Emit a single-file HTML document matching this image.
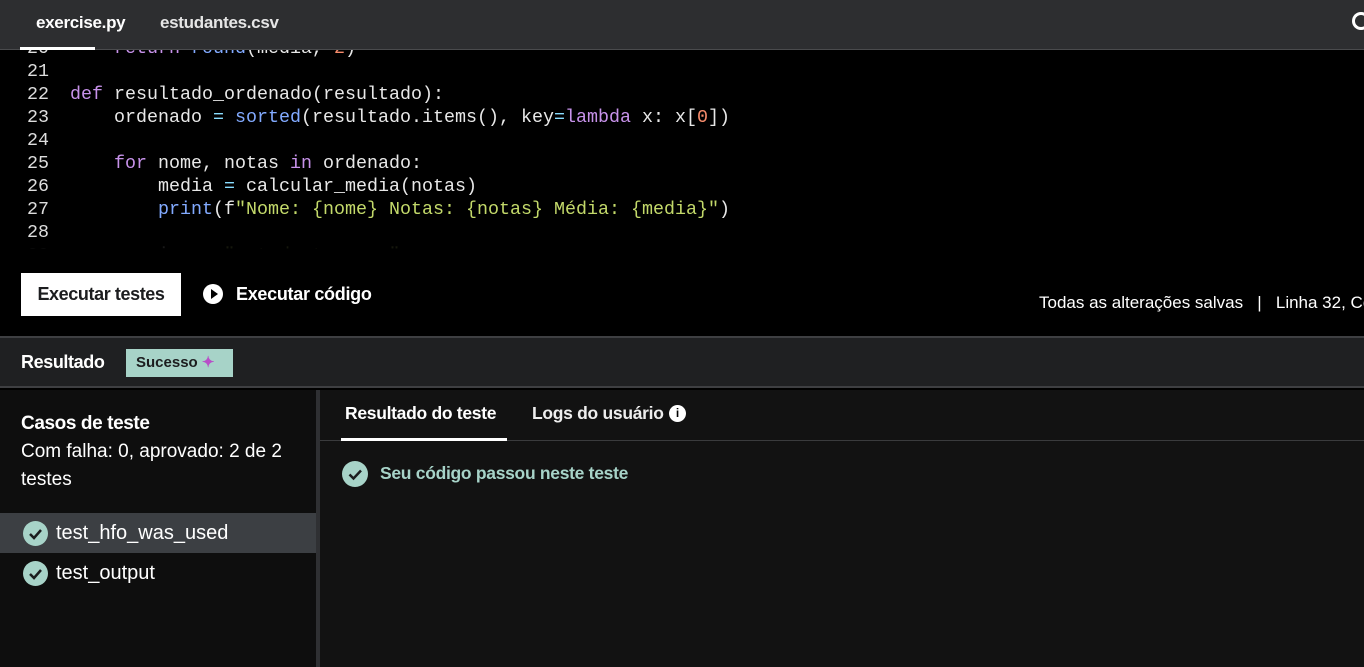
<!DOCTYPE html>
<html><head><meta charset="utf-8"><style>
*{margin:0;padding:0;box-sizing:border-box}
body{width:1364px;height:667px;overflow:hidden;background:#000;font-family:"Liberation Sans",sans-serif;color:#fff;position:relative}
.abs{position:absolute;white-space:nowrap}
.top{left:0;top:0;width:1364px;height:50px;background:#2d2e30;border-bottom:1px solid #4a4b4d}
.tab{top:13px;font-size:17px;font-weight:bold;letter-spacing:-0.3px}
.code{left:0;top:37px;width:1364px;height:213px;overflow:hidden;font-family:"Liberation Mono",monospace;font-size:18.33px;line-height:23px;color:#e8e8e8}
.ln{position:absolute;left:0;width:49px;text-align:right;color:#ddd}
.cl{position:absolute;left:70px;white-space:pre}
.k{color:#c792ea}.b{color:#82aaff}.o{color:#89ddff}.n{color:#f78c6c}.s{color:#c3d96a}
.fade{left:0;top:238px;width:1364px;height:14px;background:linear-gradient(rgba(0,0,0,0.3),#000 80%)}
</style></head><body>
<div class="abs code">
<div class="ln" style="top:0">20</div><div class="cl" style="top:0">    <span class="k">return</span> <span class="b">round</span>(media, <span class="n">2</span>)</div>
<div class="ln" style="top:23px">21</div>
<div class="ln" style="top:46px">22</div><div class="cl" style="top:46px"><span class="k">def</span> resultado_ordenado(resultado):</div>
<div class="ln" style="top:69px">23</div><div class="cl" style="top:69px">    ordenado <span class="o">=</span> <span class="b">sorted</span>(resultado.items(), key<span class="o">=</span><span class="k">lambda</span> x: x[<span class="n">0</span>])</div>
<div class="ln" style="top:92px">24</div>
<div class="ln" style="top:115px">25</div><div class="cl" style="top:115px">    <span class="k">for</span> nome, notas <span class="k">in</span> ordenado:</div>
<div class="ln" style="top:138px">26</div><div class="cl" style="top:138px">        media <span class="o">=</span> calcular_media(notas)</div>
<div class="ln" style="top:161px">27</div><div class="cl" style="top:161px">        <span class="b">print</span>(f<span class="s">"Nome: {nome} Notas: {notas} Média: {media}"</span>)</div>
<div class="ln" style="top:184px">28</div>
<div class="ln" style="top:207px">29</div><div class="cl" style="top:207px">    arquivo <span class="o">=</span> <span class="s">"estudantes.csv"</span></div>
</div>
<div class="abs top"></div>
<div class="abs tab" style="left:36px">exercise.py</div>
<div class="abs tab" style="left:160px;color:#e6e6e6">estudantes.csv</div>
<div class="abs" style="left:1352px;top:12px;width:18px;height:18px;border:3px solid #fff;border-radius:50%;border-right-color:transparent"></div>
<div class="abs" style="left:20px;top:47px;width:75px;height:3px;background:#fff"></div>
<div class="abs fade"></div>
<div class="abs" style="left:0;top:250px;width:1364px;height:86px;background:#000"></div>
<div class="abs" style="left:21px;top:273px;width:160px;height:43px;background:#fff;color:#1c1d1f;font-weight:bold;font-size:18px;line-height:43px;text-align:center;letter-spacing:-0.4px">Executar testes</div>
<div class="abs" style="left:203px;top:284px;width:20px;height:20px;border-radius:50%;background:#fff"></div>
<div class="abs" style="left:211px;top:289px;width:0;height:0;border-left:7px solid #000;border-top:5px solid transparent;border-bottom:5px solid transparent"></div>
<div class="abs" style="left:236px;top:284px;font-weight:bold;font-size:18px;letter-spacing:-0.3px">Executar código</div>
<div class="abs" style="left:1039px;top:293px;font-size:17px">Todas as alterações salvas &nbsp;&nbsp;|&nbsp;&nbsp; Linha 32, Coluna 1</div>
<div class="abs" style="left:0;top:336px;width:1364px;height:52px;background:#1f2022;border-top:2px solid #3e3f42;border-bottom:2px solid #3e3f42"></div>
<div class="abs" style="left:21px;top:352px;font-weight:bold;font-size:18px;letter-spacing:-0.4px">Resultado</div>
<div class="abs" style="left:126px;top:349px;width:107px;height:28px;background:#a7d3c8;color:#1c1d1f;font-weight:bold;font-size:15px;line-height:28px;padding-left:10px">Sucesso <span style="color:#b84fc8">✦</span></div>
<div class="abs" style="left:0;top:390px;width:316px;height:277px;background:#0e0e0e"></div>
<div class="abs" style="left:316px;top:390px;width:4px;height:277px;background:#2f3033"></div>
<div class="abs" style="left:320px;top:390px;width:1044px;height:277px;background:#121212"></div>
<div class="abs" style="left:21px;top:413px;font-weight:bold;font-size:19px;letter-spacing:-0.4px">Casos de teste</div>
<div class="abs" style="left:21px;top:438px;font-size:19px;line-height:28px;width:285px;white-space:normal">Com falha: 0, aprovado: 2 de 2 testes</div>
<div class="abs" style="left:0;top:513px;width:316px;height:40px;background:#3c3f43"></div>
<svg class="abs" style="left:23px;top:521px" width="25" height="25"><circle cx="12.5" cy="12.5" r="12.5" fill="#a7d3c8"/><path d="M7 13l4 4 7-8" stroke="#1c1d1f" stroke-width="2.5" fill="none"/></svg>
<div class="abs" style="left:56px;top:522px;font-size:20px">test_hfo_was_used</div>
<svg class="abs" style="left:23px;top:561px" width="25" height="25"><circle cx="12.5" cy="12.5" r="12.5" fill="#a7d3c8"/><path d="M7 13l4 4 7-8" stroke="#1c1d1f" stroke-width="2.5" fill="none"/></svg>
<div class="abs" style="left:56px;top:562px;font-size:20px">test_output</div>
<div class="abs" style="left:320px;top:440px;width:1044px;height:1px;background:#3a3b3d"></div>
<div class="abs" style="left:345px;top:403px;font-weight:bold;font-size:17.5px;letter-spacing:-0.3px">Resultado do teste</div>
<div class="abs" style="left:341px;top:438px;width:166px;height:3px;background:#fff"></div>
<div class="abs" style="left:532px;top:403px;font-weight:bold;font-size:17.5px;letter-spacing:-0.3px;color:#eee">Logs do usuário</div>
<div class="abs" style="left:669px;top:405px;width:17px;height:17px;border-radius:50%;background:#fff;color:#000;font-size:12px;font-weight:bold;text-align:center;line-height:17px">i</div>
<svg class="abs" style="left:342px;top:461px" width="26" height="26"><circle cx="13" cy="13" r="13" fill="#a7d3c8"/><path d="M7.5 13.5l4 4 7.5-8" stroke="#1c1d1f" stroke-width="2.5" fill="none"/></svg>
<div class="abs" style="left:380px;top:463px;font-weight:bold;font-size:17.5px;color:#a7d3c8;letter-spacing:-0.3px">Seu código passou neste teste</div>
</body></html>
